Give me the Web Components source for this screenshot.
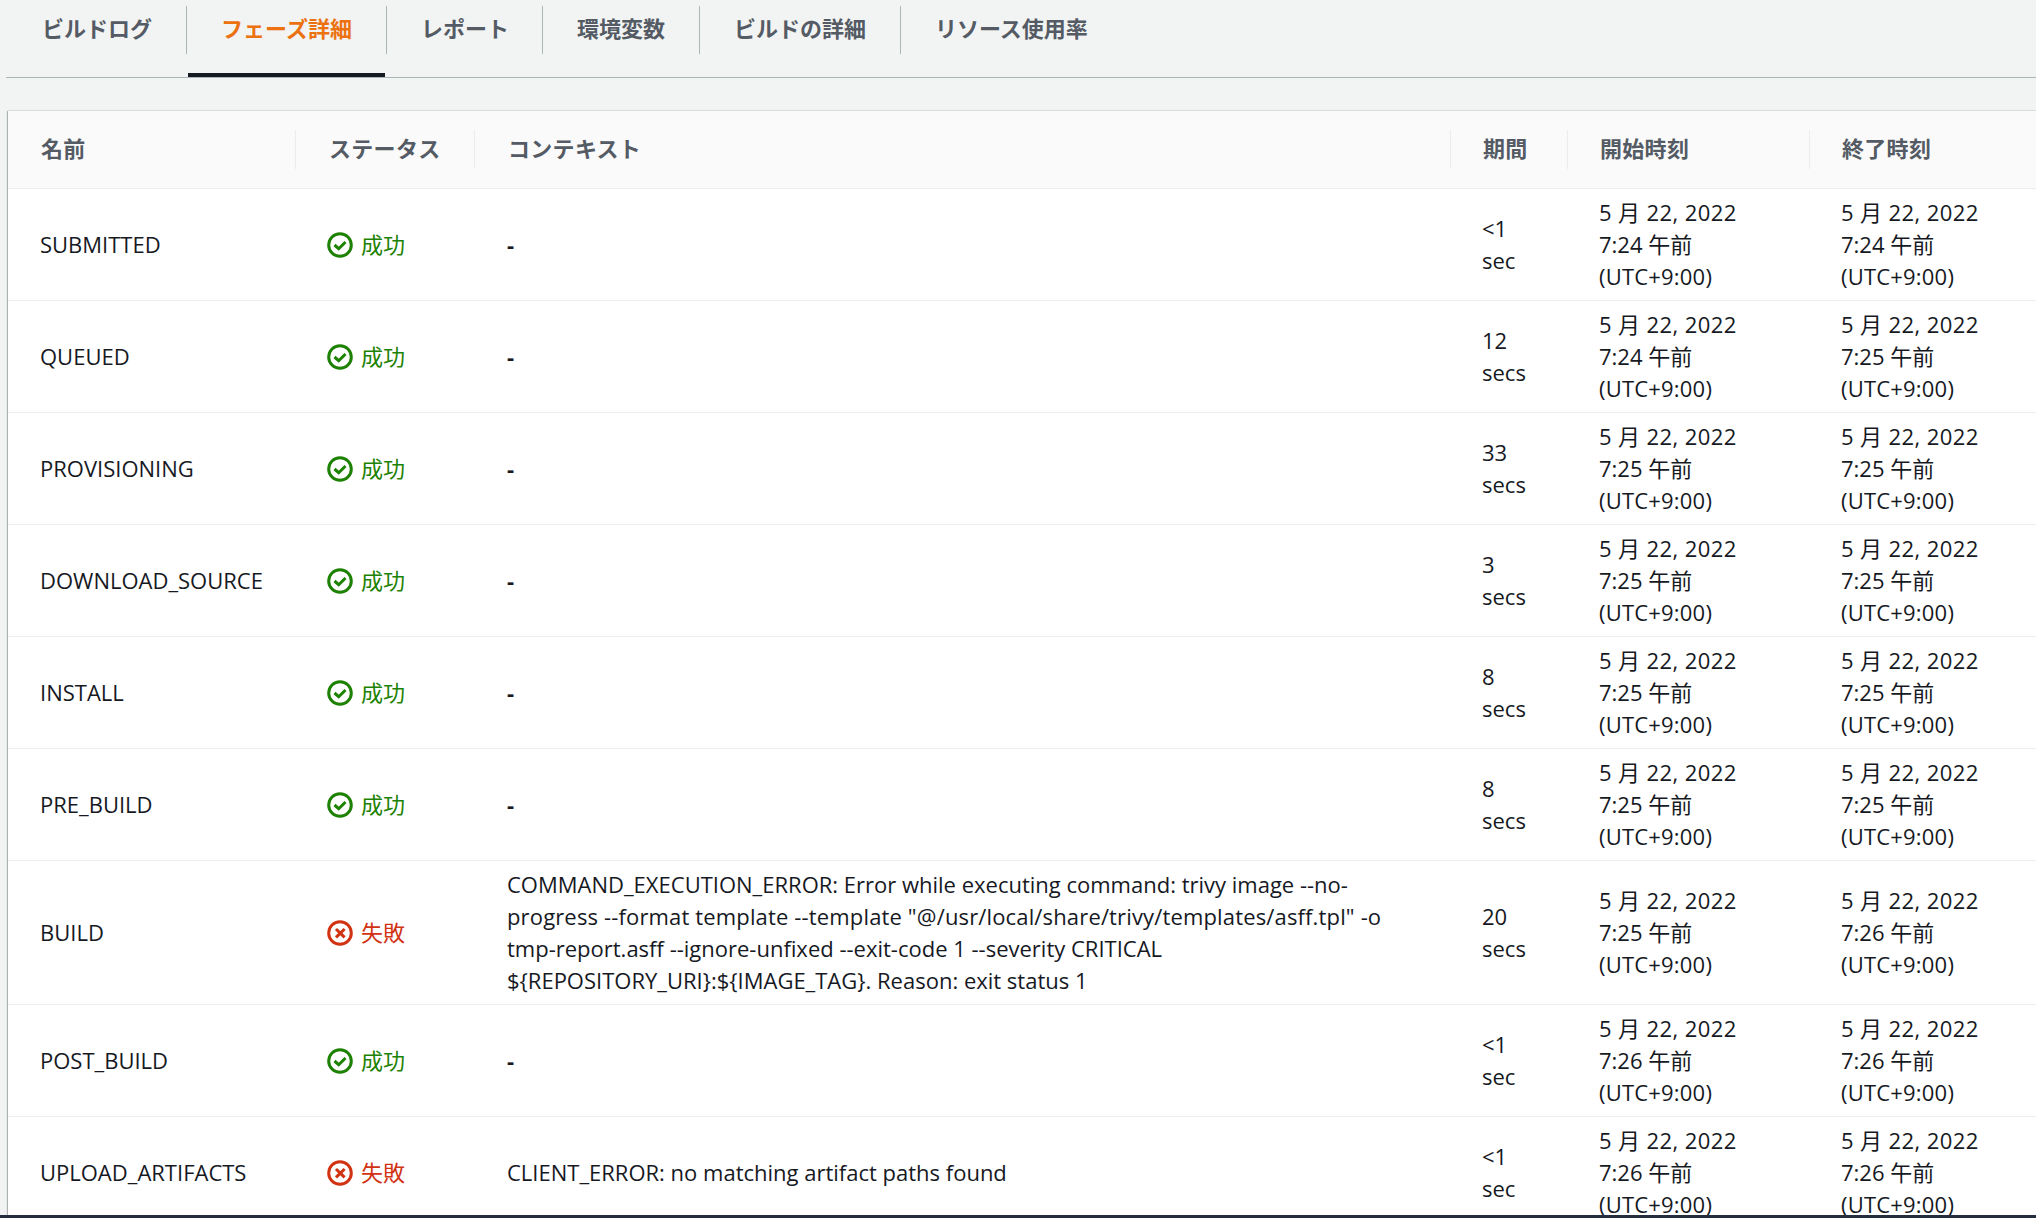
<!DOCTYPE html>
<html lang="ja">
<head>
<meta charset="utf-8">
<title>フェーズ詳細</title>
<style>
  html, body { margin: 0; height: 100%; }
  body {
    background: #f2f3f3;
    color: #16191f;
    font: 400 22px/32px "Open Sans", "Noto Sans CJK JP", sans-serif;
    overflow: hidden;
    display: flex;
    flex-direction: column;
  }
</style>
</head>
<body>
<ph-tabs>
  <ph-tab>ビルドログ</ph-tab>
  <ph-tab active>フェーズ詳細</ph-tab>
  <ph-tab style="--pr: 33px">レポート</ph-tab>
  <ph-tab>環境変数</ph-tab>
  <ph-tab>ビルドの詳細</ph-tab>
  <ph-tab last>リソース使用率</ph-tab>
</ph-tabs>
<ph-table>
  <ph-head-row>
    <ph-head-cell>名前</ph-head-cell>
    <ph-head-cell>ステータス</ph-head-cell>
    <ph-head-cell>コンテキスト</ph-head-cell>
    <ph-head-cell>期間</ph-head-cell>
    <ph-head-cell>開始時刻</ph-head-cell>
    <ph-head-cell last>終了時刻</ph-head-cell>
  </ph-head-row>
  <ph-row name="SUBMITTED" state="ok" period="&lt;1|sec" day-start="7:24" day-end="7:24"><b>-</b></ph-row>
  <ph-row name="QUEUED" state="ok" period="12|secs" day-start="7:24" day-end="7:25"><b>-</b></ph-row>
  <ph-row name="PROVISIONING" state="ok" period="33|secs" day-start="7:25" day-end="7:25"><b>-</b></ph-row>
  <ph-row name="DOWNLOAD_SOURCE" state="ok" period="3|secs" day-start="7:25" day-end="7:25"><b>-</b></ph-row>
  <ph-row name="INSTALL" state="ok" period="8|secs" day-start="7:25" day-end="7:25"><b>-</b></ph-row>
  <ph-row name="PRE_BUILD" state="ok" period="8|secs" day-start="7:25" day-end="7:25"><b>-</b></ph-row>
  <ph-row name="BUILD" state="fail" period="20|secs" day-start="7:25" day-end="7:26">COMMAND_EXECUTION_ERROR: Error while executing command: trivy image --no-<br><span style="letter-spacing: .15px">progress --format template --template "@/usr/local/share/trivy/templates/asff.tpl" -o</span><br>tmp-report.asff --ignore-unfixed --exit-code 1 --severity CRITICAL<br>${REPOSITORY_URI}:${IMAGE_TAG}. Reason: exit status 1</ph-row>
  <ph-row name="POST_BUILD" state="ok" period="&lt;1|sec" day-start="7:26" day-end="7:26"><b>-</b></ph-row>
  <ph-row name="UPLOAD_ARTIFACTS" state="fail" period="&lt;1|sec" day-start="7:26" day-end="7:26">CLIENT_ERROR: no matching artifact paths found</ph-row>
</ph-table>
<ph-footer></ph-footer>

<script>
  const COLS = '288px 179px 976px 117px 242px 1fr';

  class PhTabs extends HTMLElement {
    constructor() {
      super();
      this.attachShadow({ mode: 'open' }).innerHTML = `
        <style>
          :host {
            display: flex;
            flex: none;
            margin-left: 6px;
            padding: 6px 0 0 2px;
            border-bottom: 1px solid #aab7b8;
          }
        </style>
        <slot></slot>`;
    }
  }

  class PhTab extends HTMLElement {
    constructor() {
      super();
      this.attachShadow({ mode: 'open' }).innerHTML = `
        <style>
          :host { display: block; color: #545b64; font-weight: 700; }
          :host([active]) { color: #ec7211; }
          .label {
            height: 48px;
            line-height: 45px;
            padding: 0 var(--pr, 34px) 0 34px;
            border-right: 1px solid #aab7b8;
          }
          :host([last]) .label { border-right: 0; }
          .bar { height: 4px; margin: 19px 2px 0 1px; }
          :host([active]) .bar { background: #16191f; }
        </style>
        <div class="label"><slot></slot></div>
        <div class="bar"></div>`;
    }
  }

  class PhTable extends HTMLElement {
    constructor() {
      super();
      this.attachShadow({ mode: 'open' }).innerHTML = `
        <style>
          :host {
            display: block;
            flex: 1;
            min-height: 0;
            overflow: hidden;
            margin: 33px 0 0 8px;
            background: #fff;
            box-shadow: 0 1px 1px 0 rgba(0, 28, 36, .3), -1px 0 1px 0 rgba(0, 28, 36, .25), 0 -1px 1px 0 rgba(0, 28, 36, .06);
          }
        </style>
        <slot></slot>`;
    }
  }

  class PhHeadRow extends HTMLElement {
    constructor() {
      super();
      this.attachShadow({ mode: 'open' }).innerHTML = `
        <style>
          :host {
            display: grid;
            grid-template-columns: ${COLS};
            height: 39px;
            padding: 19px 0;
            background: #fafafa;
            border-bottom: 1px solid #eaeded;
          }
        </style>
        <slot></slot>`;
    }
  }

  class PhHeadCell extends HTMLElement {
    constructor() {
      super();
      this.attachShadow({ mode: 'open' }).innerHTML = `
        <style>
          :host {
            display: block;
            padding-left: 33px;
            line-height: 37px;
            font-weight: 700;
            letter-spacing: .3px;
            color: #545b64;
            border-right: 1px solid #eaeded;
          }
          :host([last]) { border-right: 0; }
          :host(:nth-child(n+4)) { padding-left: 32px; }
        </style>
        <slot></slot>`;
    }
  }

  const ICONS = {
    ok: '<polyline points="7.5,13 11.7,16.7 18.5,10" />',
    fail: '<path d="M9 9l8.6 8.4M17.6 9L9 17.4" />',
  };

  class PhStatus extends HTMLElement {
    constructor() {
      super();
      const state = this.getAttribute('state') || 'ok';
      this.attachShadow({ mode: 'open' }).innerHTML = `
        <style>
          :host { display: flex; align-items: center; gap: 8px; margin-top: -1px; }
          :host([state="ok"]) { color: #1d8102; }
          :host([state="fail"]) { color: #d13212; }
          svg { width: 26px; height: 26px; margin-top: 2px; fill: none; stroke: currentColor; stroke-width: 3; }
        </style>
        <svg viewBox="0 0 26 26"><circle cx="13" cy="13" r="11.3" />${ICONS[state]}</svg>
        <slot></slot>`;
    }
  }

  class PhDate extends HTMLElement {
    constructor() {
      super();
      this.attachShadow({ mode: 'open' }).innerHTML = `
        <style>
          :host { display: block; }
          .day { letter-spacing: .4px; }
          .zone { letter-spacing: .2px; }
        </style>
        <div class="day">5 月 22, 2022</div>
        <div>${this.getAttribute('time')} 午前</div>
        <div class="zone">(UTC+9:00)</div>`;
    }
  }

  class PhRow extends HTMLElement {
    constructor() {
      super();
      const attr = (n) => this.getAttribute(n);
      const state = attr('state');
      const label = state === 'ok' ? '成功' : '失敗';
      const period = attr('period').split('|').map((p) => p.replace('<', '&lt;')).join('<br>');
      this.attachShadow({ mode: 'open' }).innerHTML = `
        <style>
          :host {
            display: grid;
            grid-template-columns: ${COLS};
            align-items: center;
            padding: 7px 0 8px;
            border-bottom: 1px solid #eaeded;
          }
          .cell { padding-left: 32px; white-space: nowrap; }
          .status { padding-left: 31px; }
          .late { padding-left: 31px; }
        </style>
        <div class="cell">${attr('name')}</div>
        <div class="cell status"><ph-status state="${state}">${label}</ph-status></div>
        <div class="cell"><slot></slot></div>
        <div class="cell late">${period}</div>
        <div class="cell late"><ph-date time="${attr('day-start')}"></ph-date></div>
        <div class="cell late"><ph-date time="${attr('day-end')}"></ph-date></div>`;
    }
  }

  class PhFooter extends HTMLElement {
    constructor() {
      super();
      this.attachShadow({ mode: 'open' }).innerHTML = `
        <style>:host { display: block; flex: none; height: 3px; background: #232f3e; }</style>`;
    }
  }

  customElements.define('ph-tabs', PhTabs);
  customElements.define('ph-tab', PhTab);
  customElements.define('ph-table', PhTable);
  customElements.define('ph-head-row', PhHeadRow);
  customElements.define('ph-head-cell', PhHeadCell);
  customElements.define('ph-status', PhStatus);
  customElements.define('ph-date', PhDate);
  customElements.define('ph-row', PhRow);
  customElements.define('ph-footer', PhFooter);
</script>
</body>
</html>
